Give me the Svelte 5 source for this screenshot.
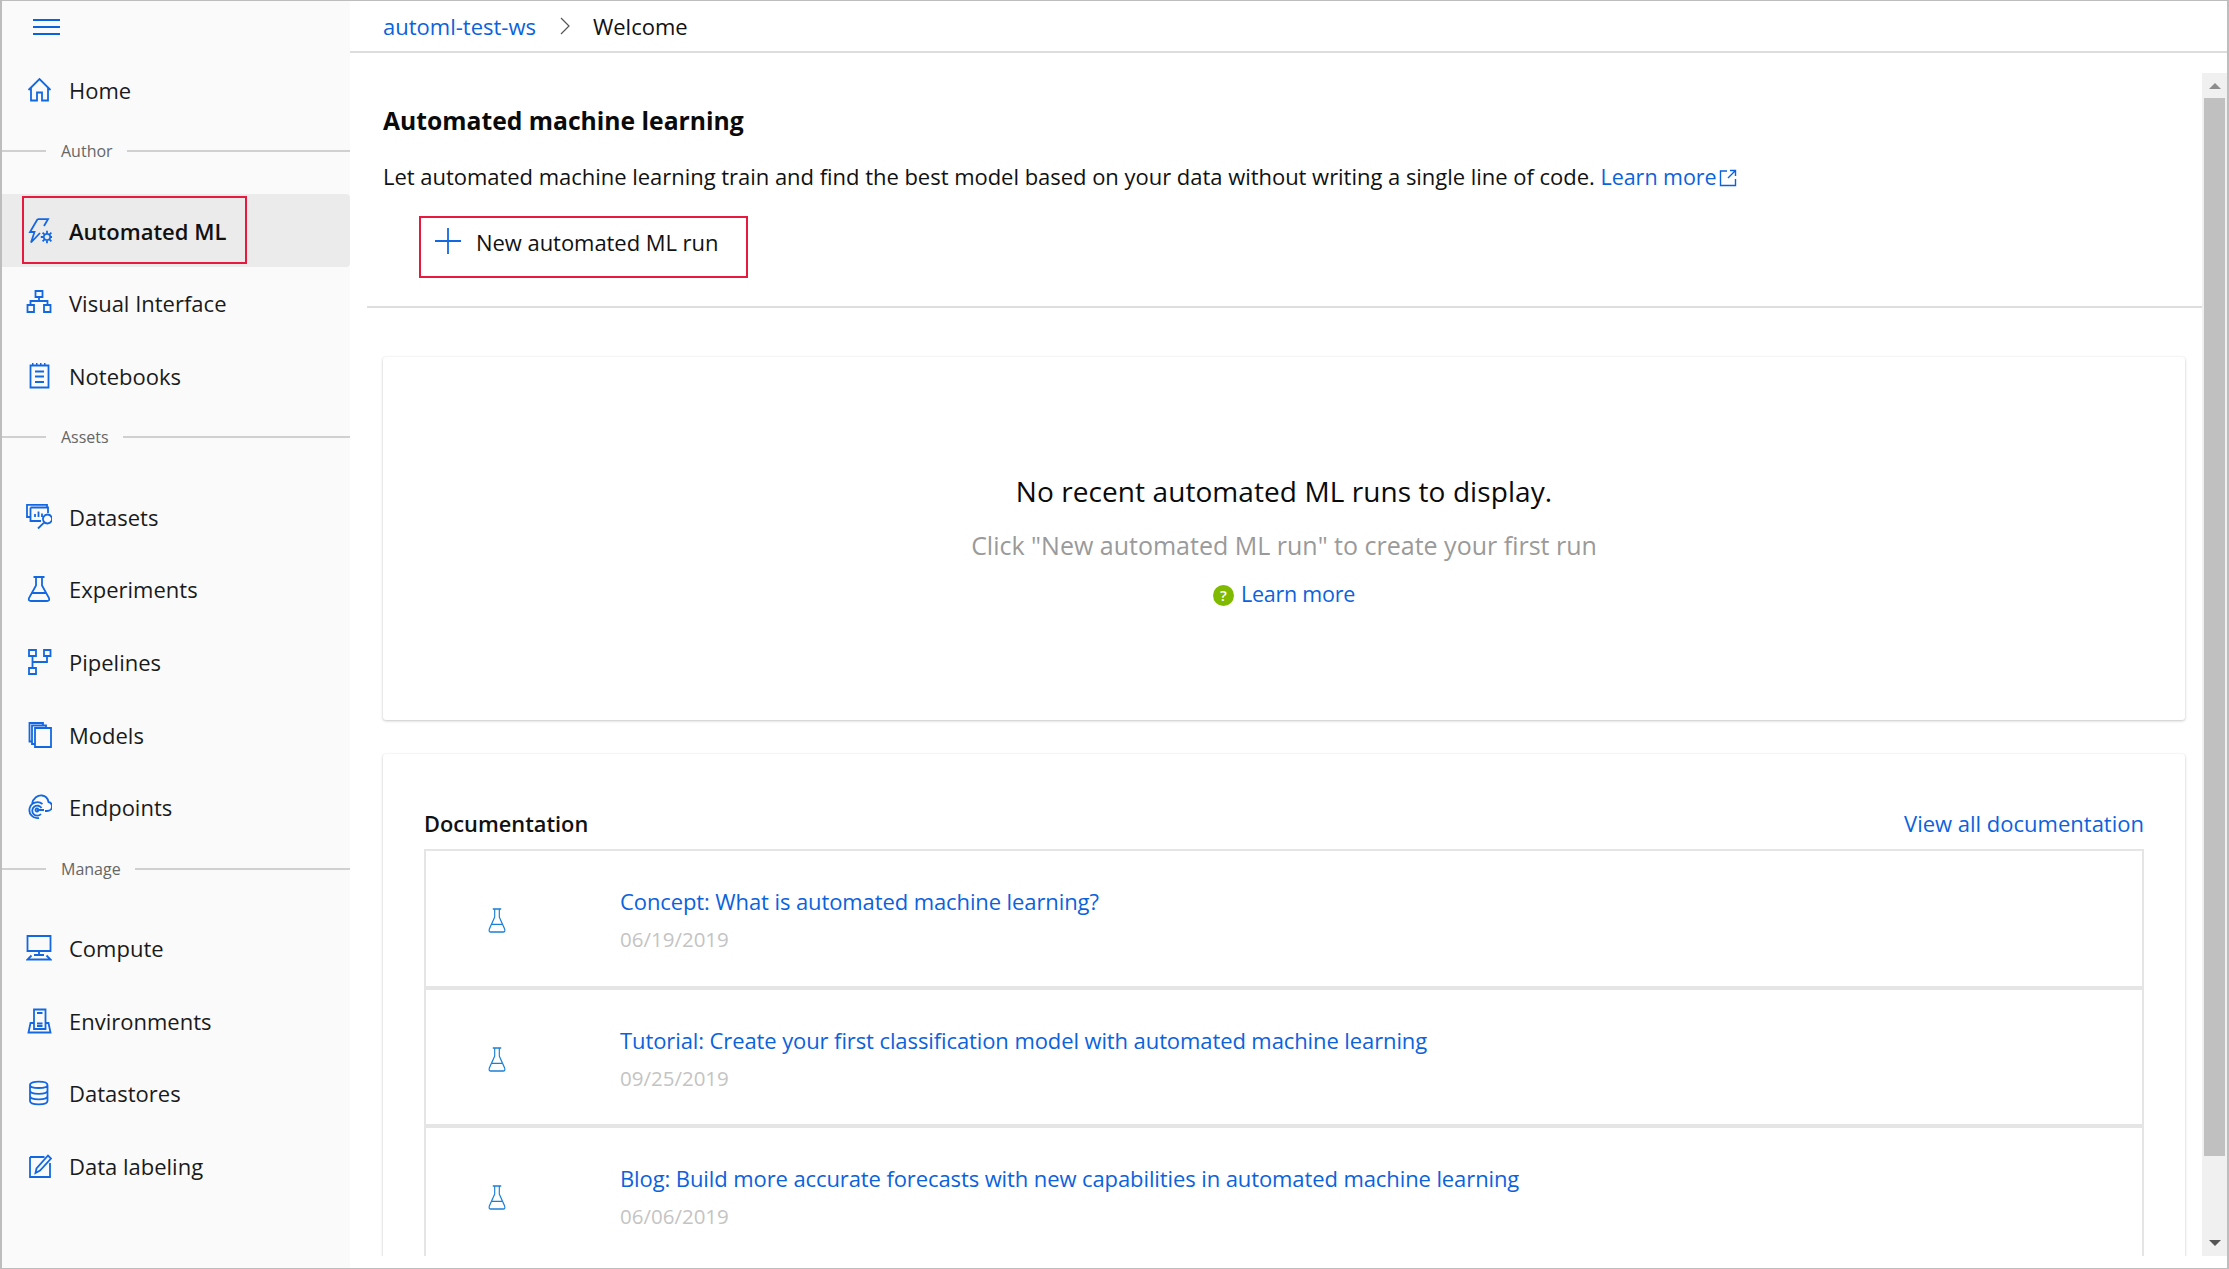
<script>
  const icons = {
    home: 'M2.5 13 L13.5 2 L24.5 13 M5 10.5 V23.5 H11 V15.5 H16 V23.5 H22 V10.5',
    auto: 'M11.5 1.2 H22 L18 8 M11.5 1.2 L4 14 H8.5 L5 24.5 L14 15 M21 15.8 a3.2 3.2 0 1 0 .01 0 Z M21 12.8 v2.4 M21 22.8 v2.4 M14.8 19 h2.4 M24.8 19 h1.4 M16.6 14.6 l1.7 1.7 M23.7 21.7 l1.7 1.7 M16.6 23.4 l1.7-1.7 M23.7 16.3 l1.7-1.7',
    visual: 'M9.5 1 H16.5 V7 H9.5 Z M13 7 V11 M4.5 15 V11 H21.5 V15 M1.5 15 H8 V22 H1.5 Z M18 15 H24.5 V22 H18 Z',
    notebook: 'M4.5 2.5 H22.5 V24.5 H4.5 Z M9 8.5 H18 M9 13.5 H18 M9 19 H18 M6 .8 H7.5 M10 .8 H11.5 M14 .8 H15.5 M18 .8 H19.5',
    datasets: 'M4.5 13 H1 V.8 H21 V3.5 M4.5 3.5 H22 V9 M4.5 3.5 V17 H15 M9 13 V10 M12.5 13 V7.5 M16 13 V9.5 M21.5 10.5 a4.5 4.5 0 1 1 -.01 0 Z M18.3 18.3 L12 24.5',
    flask: 'M7.5 1 H18.5 M10 1 V9.5 L3 22 Q2 25 5 25 H21 Q24 25 23 22 L16 9.5 V1 M6.5 17 H19.5',
    pipelines: 'M3 1 H10 V7 H3 Z M18 1 H24.5 V7 H18 Z M3 19 H10 V25 H3 Z M6.5 7 V19 M6.5 13 H21 V7',
    models: 'M9 6 H25 V25 H9 Z M9 22 H6 V3.5 H20 V6 M6 19.5 H3.5 V1 H17 V3.5',
    endpoints: 'M6 10 C7 4 12 1 16 1.5 C20 2 22 5 22.5 8 C25 8.5 26 10.5 26 12.5 C26 15 24 17 21 17 H19 M16.5 10 A8 8 0 1 0 13 24 M11 14.5 a1.5 1.5 0 1 1 -.01 0 Z M11 16 H18 M15.5 14 A5 5 0 1 0 15 20',
    compute: 'M1.5 1 H24.5 V16 H1.5 Z M13 16 V20 M8 20 H18 M5.5 20.5 L1.5 24.5 H24.5 L20.5 20.5',
    env: 'M8 1.5 H19.5 V21 H8 Z M11 5 H16.5 M11 15.5 H16.5 M11 18 H16.5 M8 15 H4.5 L2.5 24.5 H24.5 L22.5 15 H19.5',
    store: 'M4 5 C4 .5 21.5 .5 21.5 5 C21.5 9 4 9 4 5 Z M4 5 V21 C4 25.5 21.5 25.5 21.5 21 V5 M4 10.5 C4 15 21.5 15 21.5 10.5 M4 16 C4 20.5 21.5 20.5 21.5 16',
    label: 'M4 4 H18.5 M24 10 V24 H4 V4 M9.5 20 L10.5 15.5 L22 2.5 L25 5.5 L14 17.5 Z'
  };

  const sections = [
    { items: [{ label: 'Home', icon: 'home' }] },
    {
      title: 'Author',
      items: [
        { label: 'Automated ML', icon: 'auto', active: true },
        { label: 'Visual Interface', icon: 'visual' },
        { label: 'Notebooks', icon: 'notebook' }
      ]
    },
    {
      title: 'Assets',
      items: [
        { label: 'Datasets', icon: 'datasets' },
        { label: 'Experiments', icon: 'flask' },
        { label: 'Pipelines', icon: 'pipelines' },
        { label: 'Models', icon: 'models' },
        { label: 'Endpoints', icon: 'endpoints' }
      ]
    },
    {
      title: 'Manage',
      items: [
        { label: 'Compute', icon: 'compute' },
        { label: 'Environments', icon: 'env' },
        { label: 'Datastores', icon: 'store' },
        { label: 'Data labeling', icon: 'label' }
      ]
    }
  ];

  const docs = [
    { title: 'Concept: What is automated machine learning?', date: '06/19/2019' },
    { title: 'Tutorial: Create your first classification model with automated machine learning', date: '09/25/2019' },
    { title: 'Blog: Build more accurate forecasts with new capabilities in automated machine learning', date: '06/06/2019' }
  ];
</script>

<div class="frame">
  <aside class="side">
    <div class="burger"><span></span><span></span><span></span></div>
    {#each sections as s}
      {#if s.title}
        <div class="divider"><span>{s.title}</span></div>
      {/if}
      {#each s.items as it}
        <div class="item" class:active={it.active}>
          <svg class="ico" viewBox="0 0 26 26" width="26" height="26"><path d={icons[it.icon]} /></svg>
          <span>{it.label}</span>
          {#if it.active}<i class="mark"></i>{/if}
        </div>
      {/each}
    {/each}
  </aside>

  <div class="right">
    <header class="crumbs">
      <a href="#a">automl-test-ws</a>
      <svg class="chev" viewBox="0 0 12 20" width="12" height="20"><path d="M2 2 L10 10 L2 18" /></svg>
      <span>Welcome</span>
    </header>

    <div class="body">
      <main class="content">
        <section class="intro">
          <h1>Automated machine learning</h1>
          <p>Let automated machine learning train and find the best model based on your data without writing a single line of code. <a href="#a">Learn more<svg class="ext" viewBox="0 0 18 18" width="18" height="18"><path d="M8 2 H1.5 V16.5 H16.5 V10 M11 1.5 H16.5 V7 M16.5 1.5 L9 9" /></svg></a></p>
          <div class="newrun">
            <svg viewBox="0 0 26 26" width="26" height="26"><path d="M13 0 V26 M0 13 H26" /></svg>
            <span>New automated ML run</span>
          </div>
        </section>
        <hr />
        <section class="card empty">
          <div class="e1">No recent automated ML runs to display.</div>
          <div class="e2">Click "New automated ML run" to create your first run</div>
          <div class="e3"><span class="q">?</span><a href="#a">Learn more</a></div>
        </section>
        <section class="card docs">
          <div class="dhead"><strong>Documentation</strong><a href="#a">View all documentation</a></div>
          <div class="list">
            {#each docs as d}
              <div class="row">
                <div class="rowicon"><svg viewBox="0 0 26 26" width="20" height="25" preserveAspectRatio="none"><path d={icons.flask} /></svg></div>
                <div>
                  <a href="#a">{d.title}</a>
                  <div class="date">{d.date}</div>
                </div>
              </div>
            {/each}
          </div>
        </section>
      </main>
      <div class="scroll">
        <div class="arrow up"></div>
        <div class="thumb"></div>
        <div class="arrow down"></div>
      </div>
    </div>
  </div>
</div>

<style>
  :global(body) { margin: 0; background: #fff; }
  .frame {
    width: 2229px; height: 1269px; box-sizing: border-box;
    display: flex; overflow: hidden;
    border: solid #bdbdbd; border-width: 1px 2px 1px 2px;
    font-family: "Open Sans", "Noto Sans", sans-serif; color: #111;
    font-size: 22px;
  }
  a { color: #0b62dd; text-decoration: none; }
  svg path { fill: none; stroke: #1368e2; stroke-width: 1.8; }

  .side { width: 348px; flex: none; background: #fafafa; }
  .burger { display: flex; flex-direction: column; gap: 5px; padding: 18px 0 0 31px; height: 34.5px; }
  .burger span { display: block; width: 27px; height: 2px; background: #0b62dd; }
  .item {
    position: relative; display: flex; align-items: center; height: 72.7px;
    padding-left: 24px; gap: 17px; color: #1a1a1a;
  }
  .item.active { background: #ebebeb; border-radius: 0 4px 4px 0; font-weight: 600; color: #111; }
  .mark { position: absolute; left: 20px; top: 2px; width: 225px; height: 68px; box-sizing: border-box; border: 2px solid #e8193f; }
  .divider {
    display: flex; align-items: center; height: 68px; box-sizing: border-box; padding-bottom: 18px;
    font-size: 16px; color: #666;
  }
  .divider::before { content: ""; width: 44px; height: 2px; background: #d0d0d0; margin-right: 15px; }
  .divider::after { content: ""; flex: 1; height: 2px; background: #d0d0d0; margin-left: 14px; }

  .right { flex: 1; min-width: 0; display: flex; flex-direction: column; padding-bottom: 12px; }
  .crumbs {
    height: 52px; flex: none; box-sizing: border-box; border-bottom: 2px solid #ddd;
    display: flex; align-items: center; padding-left: 33px;
  }
  .chev { margin: 0 22px 0 23px; }
  .chev path { stroke: #555; stroke-width: 1.2; }

  .body { flex: 1; min-height: 0; display: flex; }
  .content { flex: 1; min-width: 0; overflow: hidden; }
  .intro { padding: 49px 0 0 33px; height: 253px; box-sizing: border-box; }
  h1 { margin: 0; font-size: 24.7px; font-weight: 700; line-height: 38px; color: #0a0a0a; }
  .intro p { margin: 21px 0 0; line-height: 30px; letter-spacing: -0.03px; }
  .intro p a { font-size: 21.5px; }
  .ext { vertical-align: -2px; margin-left: 2px; }
  .ext path { stroke: #0b62dd; stroke-width: 1.4; }
  .newrun {
    margin: 24px 0 0 36px; width: 329px; height: 62px; box-sizing: border-box;
    border: 2px solid #e8193f; display: flex; align-items: flex-start; gap: 15px; padding: 8px 0 0 14px; line-height: 32px; letter-spacing: -0.05px;
  }
  .newrun svg { margin-top: 2px; }
  hr { margin: 0 0 0 17px; border: 0; height: 2px; background: #dedede; }
  .card {
    margin: 49px 17px 0 33px; border-radius: 3px; background: #fff;
    box-shadow: 0 1px 3px rgba(0,0,0,.22), 0 0 2px rgba(0,0,0,.06);
  }
  .empty { height: 363px; box-sizing: border-box; padding-top: 114px; text-align: center; }
  .e1 { font-size: 28px; line-height: 40px; letter-spacing: 0.08px; color: #0a0a0a; }
  .e2 { font-size: 25px; line-height: 36px; margin-top: 16px; color: #9a9a9a; }
  .e3 { display: flex; justify-content: center; align-items: center; gap: 7px; margin-top: 15px; line-height: 32px; font-size: 21.5px; letter-spacing: -0.25px; }
  .q { width: 21px; height: 21px; border-radius: 50%; background: #7fba00; color: #fff; font-size: 15px; font-weight: 600; line-height: 21px; margin-top: 3px; letter-spacing: 0; }
  .docs { margin-top: 34px; height: 560px; padding: 0 41px; }
  .dhead { display: flex; justify-content: space-between; align-items: center; height: 95px; padding-top: 43px; box-sizing: border-box; }
  .dhead strong { font-weight: 600; font-size: 21.8px; }
  .list { border: solid #e5e5e5; border-width: 2px 2px 0; }
  .row { border-bottom: 4px solid #e5e5e5; display: flex; align-items: flex-start; padding-top: 34px; height: 100.7px; }
  .rowicon { width: 194px; flex: none; display: flex; justify-content: flex-start; padding-top: 23px; padding-left: 61px; box-sizing: border-box; }
  .rowicon path { stroke: #1a7fd8; stroke-width: 1.5; }
  .row a { line-height: 32px; display: block; letter-spacing: -0.1px; }
  .date { margin-top: 7px; font-size: 20.5px; color: #c4c4c4; line-height: 30px; }

  .scroll { width: 25px; flex: none; margin-top: 20px; background: #f0f0f0; height: 1183px; position: relative; }
  .thumb { position: absolute; left: 2px; right: 2px; top: 25px; height: 1058px; background: #c0c0c0; }
  .arrow { position: absolute; left: 7px; width: 0; height: 0; border-left: 6px solid transparent; border-right: 6px solid transparent; }
  .up { top: 10px; border-bottom: 6px solid #8d8d8d; }
  .down { bottom: 10px; border-top: 6px solid #555; }
</style>
